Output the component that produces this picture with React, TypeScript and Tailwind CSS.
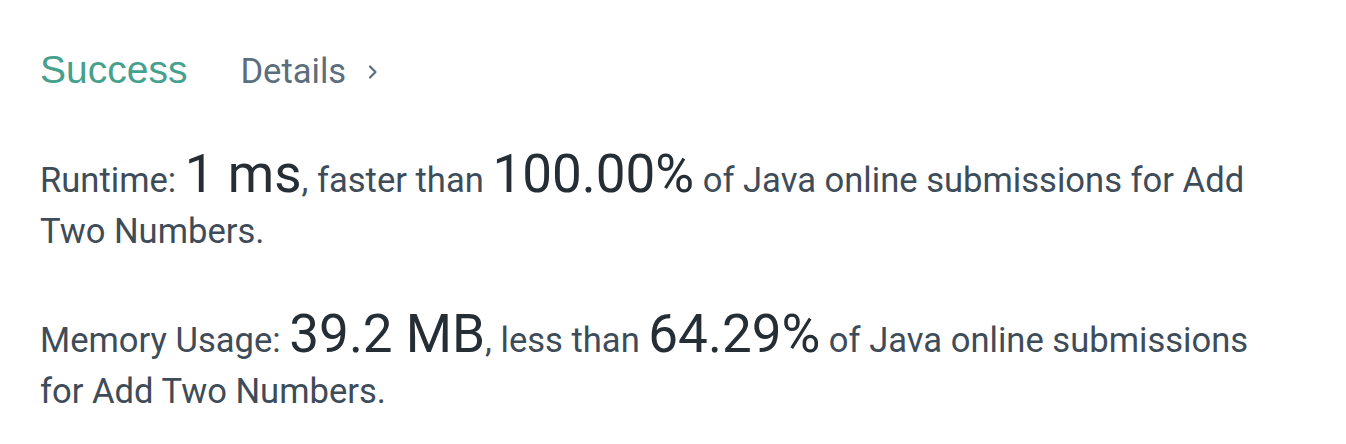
import React from "react";

const Stat = ({ children }: { children: React.ReactNode }) => (
  <span className="text-[53px] leading-none text-[#262e35]">{children}</span>
);

const App = () => {
  return (
    <div className="min-h-screen bg-white pl-[40px] pt-[43px] font-['Roboto',sans-serif] text-[#3e4c59]">
      <div className="flex items-center leading-[50px]">
        <span className="font-['Liberation_Sans',Arial,sans-serif] text-[39px] text-[#45a08d]">
          Success
        </span>
        <a className="ml-[53px] mt-[3px] flex items-center text-[34.6px] text-[#5b6e7d]">
          Details
          <svg
            width="12"
            height="16"
            viewBox="0 0 12 16"
            className="ml-[21px] mt-[2px]"
            fill="none"
            stroke="currentColor"
            strokeWidth="2.2"
            strokeLinecap="round"
            strokeLinejoin="round"
          >
            <path d="M3 2.5 L8.5 8 L3 13.5" />
          </svg>
        </a>
      </div>

      <div className="mt-[52px] flex max-w-[1230px] flex-col gap-[51px] text-[34.6px] leading-[51px]">
        <p>
          Runtime: <Stat>1 ms</Stat>, faster than <Stat>100.00%</Stat> of Java
          online submissions for Add Two Numbers.
        </p>
        <p>
          Memory Usage: <Stat>39.2 MB</Stat>, less than <Stat>64.29%</Stat> of
          Java online submissions for Add Two Numbers.
        </p>
      </div>
    </div>
  );
};

export default App;
